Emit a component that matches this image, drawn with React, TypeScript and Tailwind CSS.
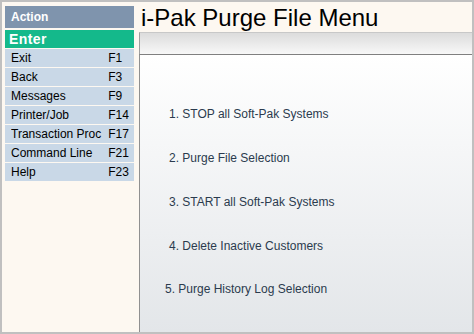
import React from "react"

const actions = [
    { label: "Exit", key: "F1" },
    { label: "Back", key: "F3" },
    { label: "Messages", key: "F9" },
    { label: "Printer/Job", key: "F14" },
    { label: "Transaction Proc", key: "F17" },
    { label: "Command Line", key: "F21" },
    { label: "Help", key: "F23" },
]

const options = [
    "1. STOP all Soft-Pak Systems",
    "2. Purge File Selection",
    "3. START all Soft-Pak Systems",
    "4. Delete Inactive Customers",
    "5. Purge History Log Selection",
]

export default function App() {
    return (
        <div className="w-[474px] h-[334px] bg-[#c0c0c0] p-[2px] flex font-['Liberation_Sans',Arial,sans-serif]">
            {/* left action panel */}
            <div className="w-[137px] h-full bg-[#fdf8f1] pl-[3px] pt-[4px]">
                <div className="w-[129px]">
                    <div className="h-[22px] bg-[#7f94ad] text-white font-bold text-[12px] pl-[6px] flex items-center">Action</div>
                    <div className="h-[18px] mt-[2px] bg-[#14b98b] text-white font-bold text-[14px] tracking-[0.4px] pl-[4px] flex items-center">Enter</div>
                    {actions.map((a) => (
                        <div key={a.label} className="h-[18px] mt-[1px] bg-[#c9d8e7] text-black text-[12px] pl-[6px] pr-[4px] flex items-center justify-between">
                            <span className="whitespace-nowrap overflow-hidden w-[98px]">{a.label}</span>
                            <span className="w-[22px]">{a.key}</span>
                        </div>
                    ))}
                </div>
            </div>

            {/* main area */}
            <div className="flex-1 h-full flex flex-col">
                <div className="h-[30px] bg-[#fdf8f1] text-black text-[24px] leading-none pl-[2px] pt-[4px] whitespace-nowrap overflow-hidden">i-Pak Purge File Menu</div>
                <div className="h-[22px] border-t border-[#c8c8c8] border-l border-l-[#a0a0a0] bg-gradient-to-b from-[#dcdcdc] to-[#f8f8f8]"></div>
                <div className="flex-1 border-t border-[#808080] border-l border-l-[#909090] bg-gradient-to-b from-white to-[#e3e6e9] pt-[52px] flex flex-col gap-[30px]">
                    {options.map((o, i) => (
                        <div key={o} className={`text-[12px] leading-[14px] text-[#2b3b4e] ${i === 4 ? "pl-[25px] -mt-[1px]" : "pl-[29px]"}`}>{o}</div>
                    ))}
                </div>
            </div>
        </div>
    )
}
